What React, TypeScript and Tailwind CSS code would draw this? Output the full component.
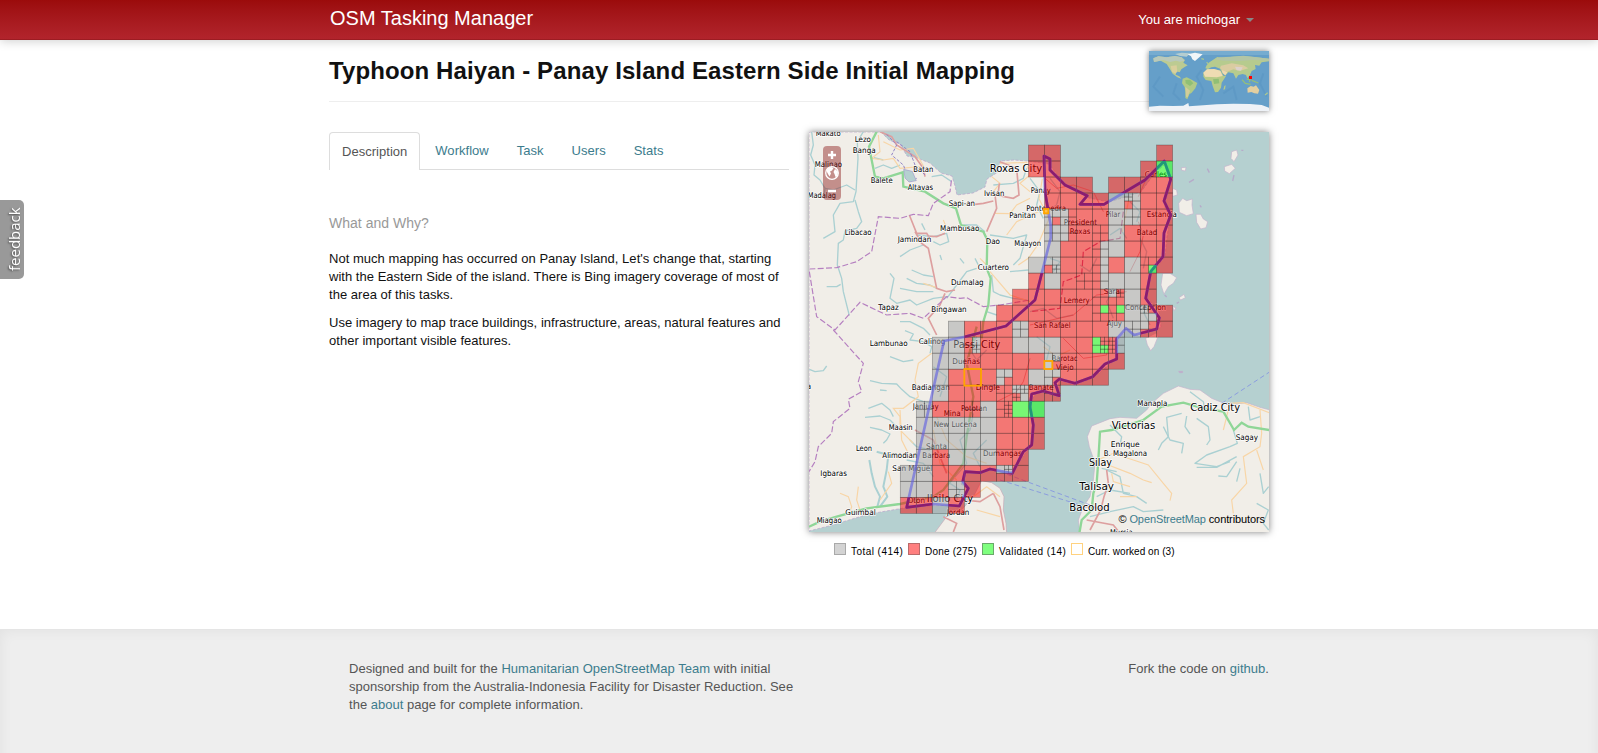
import React from "react";

type Label = [text: string, x: number, baseline: number, width: number, size?: number];

const CITY = 31;
const TOWN = 23.5;

const sheets: { dx: number; dy: number; labels: Label[] }[] = [
  {
    dx: -27,
    dy: -21,
    labels: [
      ["Makato", 47, 33, 75], ["Lezo", 164, 50, 49], ["Banga", 158, 83, 69], ["Malinao", 44, 127, 82],
      ["Batan", 340, 141, 60], ["Roxas City", 569, 141, 158, CITY], ["Balete", 212, 175, 66],
      ["Altavas", 323, 196, 76], ["Madalag", 23, 219, 85], ["Ivisan", 552, 214, 61], ["Sapi-an", 446, 244, 79],
      ["Panitan", 628, 279, 79], ["Libacao", 134, 331, 81], ["Mambusao", 420, 319, 118],
      ["Jamindan", 293, 352, 101], ["Dao", 557, 356, 43], ["Maayon", 643, 362, 80], ["Cuartero", 533, 434, 94],
      ["Dumalag", 453, 479, 98], ["Tapaz", 235, 554, 61], ["Bingawan", 394, 562, 106],
    ],
  },
  {
    dx: 663,
    dy: -21,
    labels: [
      ["Panay", 2, 203, 60], ["Pontevedra", -11, 257, 119], ["President", 101, 301, 100], ["Roxas", 119, 328, 62],
      ["Pilar", 227, 275, 44], ["Carles", 344, 156, 67], ["Estancia", 350, 275, 91], ["Batad", 320, 330, 62],
      ["Sara", 221, 506, 49], ["Lemery", 101, 535, 78], ["Concepcion", 285, 554, 123], ["Ajuy", 230, 604, 46],
      ["San Rafael", 12, 608, 110],
    ],
  },
  {
    dx: -27,
    dy: 594,
    labels: [
      ["Lambunao", 209, 49, 114], ["Calinog", 356, 43, 80], ["Passi City", 460, 53, 141, CITY],
      ["Dueñas", 457, 103, 83], ["Badiangan", 335, 180, 114], ["Dingle", 527, 180, 73], ["Banate", 686, 179, 75],
      ["Janiuay", 338, 236, 78], ["Mina", 431, 257, 51], ["Pototan", 483, 243, 78], ["New Lucena", 401, 291, 130],
      ["Maasin", 266, 300, 72], ["Santa", 378, 357, 63], ["Barbara", 367, 385, 84], ["Dumangas", 549, 378, 116],
      ["Leon", 168, 363, 48], ["Alimodian", 247, 383, 105], ["San Miguel", 277, 423, 120],
      ["Igbaras", 61, 439, 80], ["Oton", 323, 519, 52], ["Iloilo City", 380, 515, 140, CITY],
      ["Guimbal", 136, 556, 91], ["Miagao", 50, 579, 75], ["Jordan", 440, 556, 68], ["a", 20, 178, 13],
    ],
  },
  {
    dx: 663,
    dy: 594,
    labels: [
      ["Barotac", 65, 92, 78], ["Viejo", 78, 119, 53], ["Manapla", 322, 228, 90], ["Cadiz City", 481, 243, 149, CITY],
      ["Victorias", 245, 297, 131, CITY], ["Sagay", 617, 329, 67], ["Enrique", 242, 351, 87],
      ["B. Magalona", 221, 379, 130], ["Silay", 177, 409, 69, CITY], ["Talisay", 148, 480, 104, CITY],
      ["Bacolod", 118, 542, 121, CITY], ["Murcia", 240, 614, 68],
    ],
  },
];

// One character per task tile: R done, G open, V validated, * split.
const tileRows = [
  "........RR......R",
  "........RR.....RV",
  ".........RRR.RRRR",
  ".........RRRRG*RR",
  ".........**RRG*RR",
  ".........**R*GRRR",
  ".........GRR*GRRR",
  "........G*RR*RG*R",
  "........RGR**GGR.",
  ".......RRRRR**GR.",
  "......RRRRRR**G*R",
  "...GRRR*RRRRRG**R",
  "..GG*RRGGGRR**...",
  "..GGRRRRR*RRRR...",
  "..GRRR*RG*RRR....",
  "..GRRR**R*.......",
  ".*RR*G*VV........",
  ".GGGGGRRR........",
  ".GGGGGRRR........",
  ".GRGGGRR.........",
  "GGRRRR*R.........",
  "GGR*R............",
  "RRGR.............",
];

// Split tiles, keyed "col,row": top-left, top-right, bottom-left, bottom-right.
// A lower-case letter marks a quarter that is itself split in four.
const splits: Record<string, string> = {
  "14,3": "gGRG", "14,4": "GGGG", "9,4": "GGGR", "10,4": "GRGR", "9,5": "GGGG", "10,5": "GRGR",
  "12,5": "RRRR", "12,6": "RGRG", "9,7": "GGRg", "12,7": "RGRG", "15,7": "RRRV", "12,8": "RGRG",
  "11,8": "RRRR", "12,9": "RRRR", "13,9": "GrRR", "12,10": "RVRR", "13,10": "RVRR", "15,10": "gRGG",
  "7,11": "GGGG", "14,11": "GGGG", "15,11": "GRRR", "4,12": "RGRg", "12,12": "VrVv", "13,12": "rGrG",
  "9,13": "GGGR", "6,14": "GGGR", "9,14": "GGGR", "6,15": "RRRR", "7,15": "ggrG", "9,15": "RRRR",
  "1,16": "GGGG", "4,16": "RRRR", "6,16": "RrRr", "6,20": "GgRR", "3,21": "GGGG",
};

const ORIGIN_X = 274;
const ORIGIN_Y = 39;
const CELL = 48.05;
const fills: Record<string, string> = { R: "#f60000", G: "#a3a5a6", V: "#00ff00" };

type Tile = { x: number; y: number; s: number; kind: string };

const tiles: Tile[] = [];
tileRows.forEach((row, r) =>
  row.split("").forEach((ch, c) => {
    if (ch === ".") return;
    const x = ORIGIN_X + c * CELL;
    const y = ORIGIN_Y + r * CELL;
    if (ch !== "*") {
      tiles.push({ x, y, s: CELL, kind: ch });
      return;
    }
    (splits[`${c},${r}`] ?? "RRRR").split("").forEach((q, i) => {
      const h = CELL / 2;
      const qx = x + (i % 2) * h;
      const qy = y + Math.floor(i / 2) * h;
      if (q === q.toUpperCase()) {
        tiles.push({ x: qx, y: qy, s: h, kind: q });
      } else {
        for (let k = 0; k < 4; k++)
          tiles.push({ x: qx + ((k % 2) * h) / 2, y: qy + (Math.floor(k / 2) * h) / 2, s: h / 2, kind: q.toUpperCase() });
      }
    });
  }),
);

const boundary =
  "M235 24L241 27L241 38L256 53L278.300 63.700L271 72.300H295L336 48L355.300 29L361.700 47.300L355 69L361.700 83L355 101L354 124.700L341.700 139.700L336.700 166.300L350.300 185.700L347.700 197L325 203L317 196.300L307.700 207V227L296 232L283.700 244.700L266 251.300L250.300 247L246 250.700L250.300 263.700L234.300 259L222.700 262L221 274.700L224.300 293L222.700 313L214.300 319.700L203.300 341.300L181 337L171 340.700L156 339.700L153.700 349.700L159.300 356.300L150.300 374L124.300 372L97.700 375.300L135 209L156 204.700L197 194L226 168L235.300 131.300L241.700 106V93L236 60Z";

const mainland =
  "M0 0H72L80 8L91 12L98 24L108 26L121 31L132 41L143 44L146 54L148 63L164 61L176 55L178 47L189 40L191 29L205 28L219 29L240 32L252 48L262 55L280 66L300 70L332 60L345 42L356 32L361 45L356 75L361 85L358 105L356 125L342 142L338 165L350 180L352 195L330 204L318 198L309 208L308 226L284 246L266 253L250 249L249 262L228 258L222 270L225 300L222 313L210 330L203 340L181 338L158 341L152 352L160 358L151 373L120 374L95 376L60 382L40 388L20 394L0 399Z";

function OsmMap() {
  return (
    <svg className="block h-[400px] w-[460px]" viewBox="0 0 1380 1200">
      <defs>
        <clipPath id="done">
          {tiles.filter((t) => t.kind === "R").map((t, i) => (
            <rect key={i} x={t.x} y={t.y} width={t.s} height={t.s} />
          ))}
        </clipPath>
        <clipPath id="valid">
          {tiles.filter((t) => t.kind === "V").map((t, i) => (
            <rect key={i} x={t.x} y={t.y} width={t.s} height={t.s} />
          ))}
        </clipPath>
      </defs>
      <rect width="1380" height="1200" fill="#b5d0d0" />

      <path d={mainland} transform="scale(3)" fill="#f1eee8" stroke="#b9a3cb" strokeWidth="0.7" strokeDasharray="3 1.5" />
      <g fill="#f1eee8" stroke="#c3b2cc" strokeWidth="2" transform="translate(663 594)">
        <path d="M150 615L145 570L160 530L180 500L190 450L195 400L178 350L172 320L185 288L240 266L270 262L320 265L350 240L365 220L400 190L445 168L480 178L510 180L545 205L570 215L600 225L650 218L690 232L720 240V615Z" />
        <path d="M347 25L380 8L384 20L372 50L362 62L352 45Z" />
        <path d="M446 124h12v4h-10Z" fill="#b9a3cb" />
      </g>
      <g fill="#f1eee8" stroke="#c9a9b8" strokeWidth="2" transform="translate(-27 594)">
        <path d="M405 607L440 560L480 545L520 500L545 452L575 458L600 475L612 500L610 540L618 580L620 610Z" />
      </g>
      <g fill="#f1eee8" stroke="#c3b2cc" strokeWidth="2" transform="translate(663 -21)">
        <path d="M605 80L620 75L624 90L612 110L603 100Z" />
        <path d="M583 125L605 118L616 130L598 146L584 138Z" />
        <path d="M454 128L468 127L466 138L455 136Z" />
        <path d="M446 235L458 220L470 227L487 222L486 240L490 266L470 272L448 262Z" />
        <path d="M498 268L512 268L520 282L533 290L528 308L512 312L500 292Z" />
        <path d="M428 190L440 195L442 210L428 214Z" />
        <path d="M398 445H420L440 458L430 475L415 485L402 508L393 480Z" />
        <path d="M447 518L462 508L466 518L452 525Z" />
        <path d="M428 545L438 548L432 558Z" />
        <path d="M477 172L492 163M532 131L538 143M608 168L612 150M634 76H640M510 241L514 247M404 510L410 516M440 535L447 531" fill="none" strokeWidth="4" stroke="#b6aac9" />
      </g>

      <g fill="none" stroke="#aad0d2" strokeWidth="4" strokeLinejoin="round">
        <g transform="translate(-27 -21)">
          <path d="M35 20L40 60L32 90L45 120L42 150L60 165L75 190L72 210" />
          <path d="M190 20L172 50L174 100L168 200L160 230L120 235L100 270L105 320L70 340" />
          <path d="M165 225L175 260L185 290L170 310L135 318L130 345L115 355L112 420L125 460L130 500L148 572" />
          <path d="M80 485H110L122 478M75 190L100 195L140 180L165 195" />
          <path d="M225 130L250 120L275 130L300 120M222 98L250 105" />
          <path d="M270 445L282 460L270 520L290 535L330 525L350 540L400 520L440 515" />
          <path d="M335 435L370 450L400 455M320 460L350 475L390 480L410 490M300 490L350 500L400 500" />
          <path d="M300 395L330 375L370 360M350 330L400 335L440 325L446 350L420 360L400 350" />
          <path d="M300 590L330 590L370 610L390 630M440 520L470 480L500 440L530 430" />
          <path d="M490 300L530 300L555 320M570 330L640 340L680 330L660 400L640 420M630 440L685 435" />
          <path d="M575 450L580 500L600 510L640 520L680 525M560 560L590 570" />
          <path d="M420 390L425 405M480 400L492 415M525 400L535 420M365 295L375 315" />
          <path d="M395 155L425 150L455 170M580 180L640 175L670 160L680 130" />
        </g>
        <g transform="translate(663 -21)">
          <path d="M60 160L90 200L80 240L50 260M150 420L180 440L200 400M240 330L270 310L290 340M60 400L90 410L70 440" />
          <path d="M300 230L330 260L320 290M250 490L230 530L250 580M340 560L360 600M330 340L350 380L340 430" />
          <path d="M0 560L40 550L80 580L130 570M0 160L30 200L20 240L40 280" />
        </g>
        <g transform="translate(-27 594)">
          <path d="M28 118L45 125L70 122L80 108M315 2L340 12L330 30L370 35L395 50L390 70M270 80L310 95L340 90" />
          <path d="M210 152L245 160L290 162L305 178L330 200L370 215L400 220M240 180L260 182M205 235L245 220L270 240L280 260" />
          <path d="M195 262L240 258L270 270L290 290M210 292L245 300L270 312L260 330L250 340" />
          <path d="M208 390L215 430L225 470L240 500L232 530M230 365L265 375L260 420L250 470L262 500L240 530" strokeWidth="6" />
          <path d="M330 330L350 350L390 360M320 390L370 400L400 440M520 250L510 300L480 330L500 400L440 470" />
          <path d="M530 20L510 60L530 90L560 60M400 110L440 140L420 200M560 330L520 370L540 410M450 460L480 480L470 510" />
        </g>
        <g transform="translate(663 594)">
          <path d="M480 185L520 215L525 240M470 258L465 290L480 312M500 265L535 290L540 330L530 345M455 250L410 262L415 320L395 340L385 360" />
          <path d="M400 290L420 330L460 340L455 370M240 285L275 320L270 345M610 300L622 340L600 350L530 375L495 400L560 410L600 395M500 412H560L620 380" />
          <path d="M620 395L590 440L565 438M630 415L620 455M230 420L270 440L280 490L320 500L350 520M200 500L240 480L300 490" />
          <path d="M180 560L240 545L310 530L340 545L400 540M215 415L260 425M690 430L700 490L716 470M680 520L715 540L700 580L716 600" />
          <path d="M20 20L60 50L50 90M655 230L660 270L690 260" />
        </g>
      </g>

      <g fill="none" stroke="#f8d5a6" strokeWidth="3.500">
        <g transform="translate(-27 -21)">
          <path d="M235 30L240 80L215 100L250 105L280 100L300 130L360 125M600 115L680 112L690 150L660 175L690 200M585 265L630 266L650 240L690 220M620 330L650 290L715 260M655 420L685 400L720 350M430 285L440 310M540 400L560 420M570 440L630 510L690 530M370 475L410 488" />
          <path d="M250 50L300 75L340 70L380 140M575 155L600 175L580 200" />
        </g>
        <g transform="translate(-27 594)">
          <path d="M395 70L355 100L345 150L355 200L310 235L280 235L300 260L300 300L340 340M300 240L305 330L330 380M120 490L145 500L155 530L150 545M175 470L170 510L180 540M265 425L275 460L240 510M410 260L440 330L500 380L560 400M400 300L420 400L470 450" />
          <path d="M520 500L560 470L600 500M530 540L600 560" />
        </g>
        <g transform="translate(663 594)">
          <path d="M190 395L250 370L310 390L355 405L400 460L425 490L420 512M235 405L300 430L340 450L365 458M245 430L250 455L300 470M270 500H320M690 240L695 310L690 350L640 380L650 460L605 510L610 550M680 360L700 420M580 300L600 220L640 218L718 248" />
          <path d="M40 50L80 80L120 60" />
        </g>
        <path d="M700 140L690 200L720 260L690 330M960 200L940 300" />
      </g>

      <g fill="none" stroke="#dd9f9f" strokeWidth="5">
        <g transform="translate(-27 -21)">
          <path d="M240 20L275 35L290 60L345 95L370 130L375 155M600 110L650 130L657 210L640 220L560 205M598 175L595 200L585 210L590 250L560 320M435 325L410 335L385 333L380 325L350 325L340 300L328 270M525 238L550 235L580 228M345 320L365 355L385 370L410 490L440 500L465 495M435 505L420 540L385 580L410 630" />
        </g>
        <g transform="translate(-27 594)">
          <path d="M345 300L400 330L440 430M430 560L470 580L460 606M490 510L540 515L580 490M580 490L600 530L612 600" />
        </g>
        <g transform="translate(663 594)">
          <path d="M230 420L235 460L222 500L212 540L180 600M160 530L190 530L215 540M170 570L250 585L270 610" />
        </g>
      </g>
      <g fill="none" stroke="#d8686d" strokeOpacity="0.600" strokeWidth="3" transform="translate(663 -21)">
        <path d="M45 160L80 190L130 180L190 200L220 260M300 440L330 380L340 330L325 290M290 500L200 510L130 570L0 600M325 215L345 170M100 640L160 700L230 690L240 640" />
        <path d="M-100 830L-40 800L-20 770L0 700" />
      </g>

      <g fill="none" stroke="#8fd697" strokeWidth="7">
        <path d="M230 20L207 65L225 155L250 160L308 142L310 185L375 200L430 235L468 250L483 300L550 320L562 345L560 430L572 460L565 540L550 590L545 640" transform="translate(-27 -21)" />
        <path d="M530 -10L500 100L520 200L500 320L490 400L430 480L400 500L300 522L200 535L110 560L60 575L27 590" transform="translate(-27 594)" />
        <path d="M148 610L155 570L185 540L190 490L200 460L205 390L210 305L245 300L340 270L395 230L460 218L520 235L580 245L612 300L635 278L655 290L718 300" transform="translate(663 594)" />
      </g>

      <g fill="none" stroke="#b57fc0" strokeWidth="3.500" strokeDasharray="18 7">
        <path d="M28 432L110 428L170 410L215 380L235 275L300 280L340 268L385 272L400 235L450 200L455 160M28 440L50 575L105 615L180 532L260 570L330 565L370 580L440 515L480 520L500 518L550 545L600 540L690 525" transform="translate(-27 -21)" />
        <path d="M100 0L190 100L175 155L185 185L145 208L150 235L100 275L95 310L55 350L45 395L27 425" transform="translate(-27 594)" />
        <path d="M280 260L270 340L210 350L160 380L155 450L100 470L90 550L0 560" transform="translate(663 -21)" stroke="#c55a8e" />
      </g>
      <g fill="none" stroke="#8b9ddf" strokeWidth="3" strokeDasharray="14 9" transform="translate(663 594)">
        <path d="M575 220L720 125M-90 425L180 525M-90 450L150 525" />
      </g>
      <g fill="none" stroke="#9384c6" strokeWidth="3" strokeDasharray="9 5" transform="translate(-27 -21)">
        <path d="M260 28L290 60L275 90L310 120L330 170L350 160M290 50L330 80L345 120L375 150" />
      </g>
      <path d="M284 112L310 118L322 146L300 150L288 138Z" fill="#b5d0d0" stroke="#9384c6" strokeWidth="1.500" />

      {sheets.map((sheet, i) => (
        <g key={i} transform={`translate(${sheet.dx} ${sheet.dy})`} fontFamily="'DejaVu Sans', sans-serif">
          {sheet.labels.map(([text, x, y, width, size]) => (
            <text
              key={text}
              x={x}
              y={y}
              fontSize={size ?? TOWN}
              textLength={width}
              lengthAdjust="spacingAndGlyphs"
              fill="#000"
              stroke="#fff"
              strokeOpacity="0.850"
              strokeWidth="5"
              strokeLinejoin="round"
              paintOrder="stroke"
            >
              {text}
            </text>
          ))}
        </g>
      ))}

      <g stroke="#222" strokeOpacity="0.360" strokeWidth="2.300">
        {tiles.map((t, i) => (
          <rect key={i} x={t.x} y={t.y} width={t.s} height={t.s} fill={fills[t.kind]} fillOpacity={t.kind === "G" ? 0.52 : 0.5} />
        ))}
      </g>

      <g fill="none" strokeLinejoin="round">
        <path d={boundary} transform="scale(3)" strokeWidth="2.700" stroke="#6464e0" strokeOpacity="0.650" />
        <g clipPath="url(#done)">
          <path d={boundary} transform="scale(3)" strokeWidth="2.700" stroke="#8b1c6e" />
        </g>
        <g clipPath="url(#valid)">
          <path d={boundary} transform="scale(3)" strokeWidth="2.700" stroke="#1f9a78" />
        </g>
      </g>

      <g fill="none" stroke="#ffa500" strokeWidth="5.500">
        <rect x="466" y="711" width="50" height="50" />
        <rect x="706" y="687" width="24" height="24" />
        <rect x="705" y="231" width="13" height="13" fill="#ffc04a" />
      </g>
    </svg>
  );
}

function ZoomControl() {
  return (
    <div className="absolute top-[14px] left-[14px] h-[54px] w-[18px] rounded-[4px] bg-[#8b1a1a]/45">
      <svg className="block h-[54px] w-[18px]" viewBox="0 0 18 54" fill="none" stroke="#fff">
        <path d="M5 9H13M9 5V13M5 45H13" strokeWidth="2.400" />
        <circle cx="9" cy="27" r="6.300" strokeWidth="1.300" />
        <path
          d="M4.500 22.500L8 21L10.500 22L9 24.500L7 25.500L8 27.500L6.500 30.500L5 28L3.500 25ZM12 23L15 25.500L14.500 30L12.500 31L11.500 28L10.500 26Z"
          fill="#fff"
          stroke="none"
        />
      </svg>
    </div>
  );
}

function WorldMap() {
  return (
    <svg className="block h-[60px] w-[120px]" viewBox="27 33 360 180">
      <rect x="27" y="33" width="360" height="180" fill="#659fc9" />
      <path d="M27 33H387V45H27Z" fill="#76acd0" />
      <g fill="none" stroke="#5692c0" strokeWidth="6" strokeOpacity="0.400">
        <path d="M110 130L100 160L120 180M185 90L170 110L190 150L180 180M250 160L280 140L290 180M60 110L40 140L70 170M370 100L360 130L380 170" />
      </g>
      <path d="M40 55L55 49L80 52L105 48L125 52L135 60L130 68L143 76L134 81L124 88L119 97L108 94L107 104L118 109L124 116L112 112L98 101L90 88L80 72L62 62L42 66Z" fill="#bccb92" />
      <path d="M40 55L55 49L80 52L105 48L125 52L133 62L120 65L108 62L90 66L70 60L42 66Z" fill="#b9c9bb" />
      <path d="M92 78L110 76L112 95L106 101L96 95Z" fill="#d9cf9c" />
      <path d="M105 42L125 38L150 40L140 50L120 48Z" fill="#b5cdd0" />
      <path d="M143 43L165 38L188 43L178 52L165 63L157 58L153 49Z" fill="#f2f6f8" />
      <path d="M128 116L140 112L155 119L172 129L166 145L155 158L148 163L142 178L136 174L136 155L134 141L126 130Z" fill="#b0ca86" />
      <path d="M136 120L150 119L160 130L150 138L137 130Z" fill="#8fbf75" />
      <path d="M136 140L150 152L143 172L138 170Z" fill="#d3cc9a" />
      <path d="M190 98L201 88L222 87L242 92L250 107L258 108L245 128L243 143L234 156L225 157L218 138L214 123L197 120L190 110Z" fill="#b7cb88" />
      <path d="M190 98L201 88L222 87L241 92L248 108L230 112L195 110Z" fill="#efdcb3" />
      <path d="M219 118L236 116L238 130L222 132Z" fill="#90bf75" />
      <path d="M253 138L257 136L255 148L250 149Z" fill="#b7cb88" />
      <path d="M199 77L206 68L222 58L232 51L250 55L275 50L310 48L350 52L387 56V64L365 67L358 77L345 75L347 87L335 93L330 105L322 115L318 105L308 102L295 105L288 116L280 100L265 97L256 107L247 99L240 86L225 80L214 82L204 87L196 85Z" fill="#b6cb8e" />
      <path d="M222 58L240 52L275 50L310 47L350 52L387 56V62L340 60L300 63L250 62Z" fill="#b3c5a5" />
      <path d="M243 77L275 70L310 76L325 85L300 92L280 88L262 95L250 95L240 84Z" fill="#dacca1" />
      <path d="M285 80L308 82L303 92L290 91Z" fill="#dcd1cc" />
      <path d="M245 90L262 97L256 106L248 100Z" fill="#eed8b0" />
      <path d="M306 119L316 130L332 133M320 117L330 119L328 126M335 121L355 129" fill="none" stroke="#95bf78" strokeWidth="4" />
      <path d="M322 145L332 138L341 140L348 136L358 150L354 161L343 160L334 156L323 158Z" fill="#e3cfa0" />
      <path d="M375 165L383 158M200 66L204 72M184 56L192 58" stroke="#a9c691" strokeWidth="4" />
      <path d="M27 200L60 197L100 198L130 197L145 189L147 199L190 196L230 193L280 191L330 192L365 195L387 203V213H27Z" fill="#eef2f7" />
      <rect x="327" y="108" width="9" height="9" fill="#ff0000" />
    </svg>
  );
}

const legend = [
  { label: "Total (414)", item: "w-[74px] tracking-[0.45px]", box: "border-[#a9a9a9] bg-[#d3d3d3]" },
  { label: "Done (275)", item: "w-[74px] tracking-[0.2px]", box: "border-[#b96a6a] bg-[#ff7f7f]" },
  { label: "Validated (14)", item: "w-[89px] tracking-[0.4px]", box: "border-[#6aa96a] bg-[#7fff7f]" },
  { label: "Curr. worked on (3)", item: "tracking-[0.05px]", box: "border-[#ffd27f] bg-white" },
];

const link = "text-[#3c7c8d]";

export default function App() {
  return (
    <div className="relative flex h-[753px] flex-col overflow-hidden bg-white font-['Liberation_Sans',Arial,sans-serif] text-[13px] leading-[18px] tracking-[0.025px] text-[#111]">
      <header className="relative h-[40px] shrink-0 border-b border-[#9c1c22] bg-linear-to-b from-[#9b0b0b] to-[#b2242c] shadow-[0_1px_10px_rgba(0,0,0,0.2)]">
        <div className="mx-auto flex w-[940px] justify-between">
          <a className="pt-[8px] pl-px text-[20px] leading-[20px] tracking-normal text-white">OSM Tasking Manager</a>
          <a className="flex items-center pt-[11px] pr-[15px] text-white">
            You are michogar
            <span className="ml-[6px] border-x-4 border-t-4 border-x-transparent border-t-[#888]" />
          </a>
        </div>
      </header>

      <main className="mx-auto w-[940px] flex-1">
        <div className="flex justify-between">
          <h1 className="mt-[12px] h-[50px] flex-1 border-b border-[#eee] pt-[1px] text-[24px] leading-[36px] font-bold tracking-[0.11px]">
            Typhoon Haiyan - Panay Island Eastern Side Initial Mapping
          </h1>
          <div className="mt-[11px] h-[60px] w-[120px] shadow-[0_0_6px_rgba(0,0,0,0.5)]">
            <WorldMap />
          </div>
        </div>

        <div className="mt-[21px] flex gap-[20px]">
          <section className="w-[460px]">
            <nav className="flex h-[38px] items-end gap-[2px] border-b border-[#ddd]">
              <a className="-mb-px h-[38px] rounded-t-[4px] border border-b-0 border-[#ddd] bg-white px-[12px] pt-[10px] text-[#555]">Description</a>
              <a className={`${link} h-[37px] px-[13px] pt-[10px]`}>Workflow</a>
              <a className={`${link} h-[37px] px-[13px] pt-[10px]`}>Task</a>
              <a className={`${link} h-[37px] px-[13px] pt-[10px]`}>Users</a>
              <a className={`${link} h-[37px] px-[13px] pt-[10px]`}>Stats</a>
            </nav>
            <h3 className="mt-[44px] text-[14px] leading-[18px] text-[#999]">What and Why?</h3>
            <p className="mt-[18px] whitespace-nowrap">
              Not much mapping has occurred on Panay Island, Let's change that, starting
              <br />
              with the Eastern Side of the island. There is Bing imagery coverage of most of
              <br />
              the area of this tasks.
            </p>
            <p className="mt-[10px] whitespace-nowrap">
              Use imagery to map trace buildings, infrastructure, areas, natural features and
              <br />
              other important visible features.
            </p>
          </section>

          <section className="w-[460px]">
            <div className="relative h-[400px] w-[460px] shadow-[0_0_7px_rgba(0,0,0,0.5)]">
              <OsmMap />
              <ZoomControl />
              <p className="absolute right-[4px] bottom-[4px] text-[11px] tracking-[-0.1px] text-black">
                © <a className={link}>OpenStreetMap</a> contributors
              </p>
            </div>
            <ul className="mt-[10px] ml-[25px] flex text-[10px] leading-[18px] whitespace-nowrap text-black">
              {legend.map(({ label, item, box }) => (
                <li key={label} className={`flex ${item}`}>
                  <span className={`mt-px mr-[5px] h-[12px] w-[12px] shrink-0 border ${box}`} />
                  <span className="pt-px">{label}</span>
                </li>
              ))}
            </ul>
          </section>
        </div>
      </main>

      <footer className="-mb-[20px] h-[144px] shrink-0 border-t border-[#e5e5e5] bg-[#eee] text-[#555] shadow-[inset_0_0_14px_rgba(0,0,0,0.06)]">
        <div className="mx-auto flex w-[940px] justify-between pt-[30px] pl-[20px]">
          <p>
            Designed and built for the <a className={link}>Humanitarian OpenStreetMap Team</a> with initial
            <br />
            sponsorship from the Australia-Indonesia Facility for Disaster Reduction. See
            <br />
            the <a className={link}>about</a> page for complete information.
          </p>
          <p>
            Fork the code on <a className={link}>github</a>.
          </p>
        </div>
      </footer>

      <a className="absolute top-[200px] left-0 flex h-[79px] w-[24px] rotate-180 items-center justify-center rounded-l-[5px] bg-[#999] pr-[3px] font-['Open_Sans',sans-serif] text-[15px] tracking-normal text-white [writing-mode:vertical-rl] [text-shadow:-1px_-1px_2px_rgba(0,0,0,0.5)]">
        feedback
      </a>
    </div>
  );
}
